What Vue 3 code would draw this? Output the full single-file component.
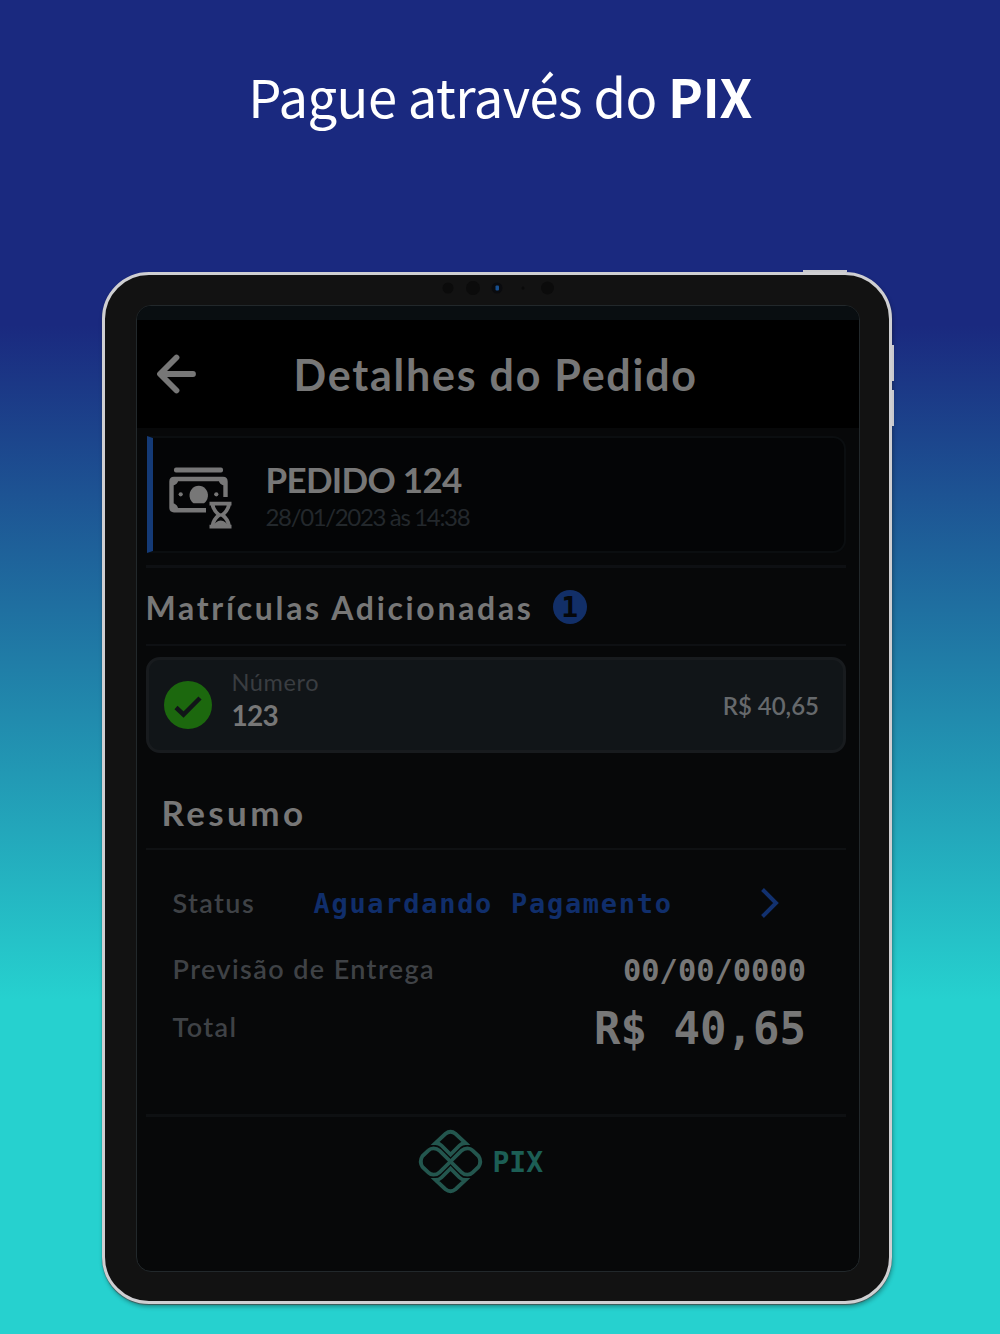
<template>
  <div class="page">
    <h1 class="headline">Pague através do <b>PIX</b></h1>

    <div class="device">
      <span class="side-btn power"></span>
      <span class="side-btn volume-up"></span>
      <span class="side-btn volume-down"></span>
      <svg class="camera" width="114" height="20" viewBox="0 0 114 20">
        <circle cx="6" cy="10" r="5.5" fill="#0b0b0b" />
        <circle cx="31" cy="10" r="7" fill="#0b0b0b" />
        <circle cx="55" cy="10" r="5.5" fill="#0a0b0e" />
        <rect x="53.5" y="7.5" width="3.5" height="5" rx="1" fill="#174f8e" />
        <circle cx="81" cy="10" r="1.5" fill="#0a0a0a" />
        <circle cx="105.5" cy="10" r="6.5" fill="#0b0b0b" />
      </svg>

      <div class="screen">
        <div class="status-bar"></div>

        <header class="topbar">
          <svg class="back" width="40" height="40" viewBox="0 0 40 40">
            <path d="M20.5 3.5 4 20l16.5 16.5M5 20h32" />
          </svg>
          <h2>Detalhes do Pedido</h2>
        </header>

        <main class="content">
          <!-- ORDER -->
          <section class="order">
            <svg class="money" width="64" height="64" viewBox="0 0 64 64">
              <rect x="5" y="1.5" width="49" height="5" rx="2" fill="#777" />
              <path
                class="bill"
                d="M56.5 31V15.5q0-2.5-2.5-2.5H5q-2.5 0-2.5 2.5v26Q2.5 44.2 5 44.2h32"
              />
              <path fill="#777" d="M3 13h6.5q-.5 6-6.5 6.500zM56 13h-6.500q.5 6 6.500 6.500zM3 44v-7q6 1 6.500 7z" />
              <path fill="#777" d="M24.5 37.3h10.500a9.200 9.600 0 1 0-10.500 0z" />
              <circle cx="11.7" cy="28.3" r="2.1" fill="#777" />
              <circle cx="47.3" cy="28.3" r="2.1" fill="#777" />
              <path class="glass" d="M40.5 37.6h22M40.5 60.6h22M43.5 38q.5 6 6.500 11-6 5-6.500 11M60 38q-.5 6-6.500 11 6 5 6.500 11" />
              <path fill="#777" d="M44 60q2.500-5 7.700-5.500 5.300.5 7.800 5.500zM49 47.500h5.500v3H49z" />
            </svg>
            <div class="order-info">
              <strong>PEDIDO {{ order.number }}</strong>
              <span>{{ order.date }}</span>
            </div>
          </section>

          <!-- REGISTRATIONS -->
          <section class="section-title">
            <h3>Matrículas Adicionadas</h3>
            <span class="count">{{ items.length }}</span>
          </section>

          <section v-for="item in items" :key="item.number" class="item">
            <svg width="48" height="48" viewBox="0 0 48 48">
              <circle cx="24" cy="24" r="24" fill="#1c680e" />
              <path d="m12 26.500 7.500 7L36 17" fill="none" stroke="#111518" stroke-width="4.5" />
            </svg>
            <div class="item-info">
              <span>Número</span>
              <strong>{{ item.number }}</strong>
            </div>
            <span class="price">{{ item.price }}</span>
          </section>

          <!-- SUMMARY -->
          <h3 class="summary-title">Resumo</h3>
          <section class="summary">
            <div class="row status">
              <span class="label">Status</span>
              <span class="value">{{ order.status }}</span>
              <svg width="18" height="30" viewBox="0 0 18 30">
                <path d="M1.5 1.5 15 15 1.5 28.5" />
              </svg>
            </div>
            <div class="row delivery">
              <span class="label">Previsão de Entrega</span>
              <span class="value">{{ order.delivery }}</span>
            </div>
            <div class="row total">
              <span class="label">Total</span>
              <span class="value">{{ order.total }}</span>
            </div>
          </section>

          <!-- PAYMENT -->
          <footer class="pix">
            <svg width="63" height="63" viewBox="0 0 63 63">
              <path d="M31.5 24.5 22.5 15.5Q20 13 16.5 13L26.5 3.8q5-4 10 0L46.500 13q-3.500 0-6 2.500z" />
              <path d="M31.5 38.5 22.5 47.5Q20 50 16.5 50l10 9.200q5 4 10 0l10-9.200q-3.500 0-6-2.500z" />
              <path d="M31.5 31.5 20.5 20.7q-2.500-2.400-6-2.400-3 0-5 2L3.500 26q-3.500 5.500 0 11l6 5.700q2 2 5 2 3.500 0 6-2.400z" />
              <path d="M31.5 31.5 42.5 20.7q2.500-2.400 6-2.400 3 0 5 2l6 5.700q3.500 5.500 0 11l-6 5.700q-2 2-5 2-3.500 0-6-2.400z" />
            </svg>
            <span>PIX</span>
          </footer>
        </main>
      </div>
    </div>
  </div>
</template>

<script setup>
import { ref } from "vue"

const order = ref({
  number: 124,
  date: "28/01/2023 às 14:38",
  status: "Aguardando Pagamento",
  delivery: "00/00/0000",
  total: "R$ 40,65",
})

const items = ref([{ number: "123", price: "R$ 40,65" }])
</script>

<style>
body {
  margin: 0;
}
</style>

<style scoped>
* {
  box-sizing: border-box;
}

.page {
  width: 1000px;
  height: 1334px;
  overflow: hidden;
  background: linear-gradient(#1a297f 325px, #26d1cf 1000px);
  font-family: Lato, "Open Sans", sans-serif;
}

h1,
h2,
h3 {
  margin: 0;
}

.headline {
  height: 272px;
  padding-top: 55px;
  color: #fff;
  font-family: "Noto Sans CJK JP", "Noto Sans", sans-serif;
  font-size: 52.5px;
  font-weight: 400;
  line-height: 80px;
  letter-spacing: -0.5px;
  text-align: center;
  white-space: nowrap;
}

.headline b {
  font-weight: 700;
}

/* TABLET FRAME */
.device {
  position: relative;
  width: 790px;
  height: 1032px;
  margin-left: 102px;
  padding: 30px 29px 29px 30.5px;
  border: 3px solid #cfcfd2;
  border-radius: 47px;
  background: #121212;
  box-shadow: 0 1px 1px rgba(70, 70, 70, 0.8), 1px 3px 4px rgba(0, 0, 0, 0.3);
}

.side-btn {
  position: absolute;
  background: #c9c9cd;
}

.power {
  top: -5px;
  left: 698px;
  width: 44px;
  height: 2px;
}

.volume-up,
.volume-down {
  right: -5px;
  width: 2px;
  height: 36px;
}

.volume-up {
  top: 70px;
}

.volume-down {
  top: 115px;
}

.camera {
  position: absolute;
  top: 3px;
  left: 337px;
}

.screen {
  height: 967px;
  border: 1px solid #22282b;
  border-radius: 15px;
  overflow: hidden;
  background: #070809;
}

.status-bar {
  height: 14px;
  background: #090e11;
}

.topbar {
  display: flex;
  align-items: center;
  height: 108px;
  padding-left: 19px;
  background: #000;
}

.back {
  fill: none;
  stroke: #777;
  stroke-width: 5.8;
  stroke-linecap: round;
  stroke-linejoin: round;
}

.topbar h2 {
  margin-left: 98px;
  color: #777;
  font-size: 43px;
  font-weight: 700;
  letter-spacing: 1.75px;
  white-space: nowrap;
}

.content {
  padding: 8px 13px 0 9px;
}

/* ORDER */
.order {
  display: flex;
  height: 117px;
  margin-left: 1px;
  padding: 28px 0 0 16px;
  border: 2px solid #0b0e10;
  border-left: 6px solid #143a76;
  border-radius: 0 13px 13px 0;
  background: #040506;
}

.order-info {
  display: flex;
  flex-direction: column;
  margin-left: 33px;
  white-space: nowrap;
}

.order-info strong {
  height: 41px;
  margin-top: -7px;
  color: #777;
  font-size: 35px;
  line-height: 40px;
  letter-spacing: -0.7px;
}

.order-info span {
  color: #23282c;
  font-size: 24px;
  line-height: 34px;
  letter-spacing: -1.35px;
}

/* REGISTRATIONS */
.section-title {
  display: flex;
  align-items: center;
  height: 81px;
  margin-top: 12px;
  padding-top: 2px;
  border-top: 3px solid #0e1013;
  border-bottom: 2px solid #0e1013;
}

.section-title h3 {
  color: #777;
  font-size: 32px;
  font-weight: 700;
  letter-spacing: 2.68px;
}

.count {
  width: 34px;
  height: 34px;
  margin-left: 19px;
  border-radius: 50%;
  background: #122f68;
  color: #05070a;
  font: bold 28px/36px "DejaVu Sans Mono", monospace;
  text-align: center;
}

.item {
  display: flex;
  align-items: center;
  height: 96px;
  margin-top: 11px;
  padding: 0 24px 0 15px;
  border: 3px solid #181b1e;
  border-radius: 14px;
  background: #111518;
}

.item-info {
  display: flex;
  flex-direction: column;
  margin-left: 20px;
}

.item-info span {
  margin-top: -14px;
  color: #3a3d41;
  font-size: 23.5px;
  line-height: 34px;
  letter-spacing: 0.6px;
}

.item-info strong {
  color: #777;
  font-size: 28px;
  line-height: 32px;
  letter-spacing: -0.8px;
}

.price {
  margin-left: auto;
  color: #66696c;
  font-size: 24px;
  font-weight: 600;
}

/* SUMMARY */
.summary-title {
  height: 97px;
  padding: 35px 0 0 16px;
  border-bottom: 2px solid #0f1113;
  color: #777;
  font-size: 35px;
  font-weight: 700;
  line-height: 48px;
  letter-spacing: 3.4px;
}

.summary {
  height: 264px;
  padding: 32px 40px 0 27px;
}

.row {
  display: flex;
  align-items: center;
  height: 42px;
  white-space: nowrap;
}

.row .label {
  padding-bottom: 2px;
  color: #3f4246;
  font-size: 27px;
  font-weight: 600;
  letter-spacing: 1.4px;
}

.row .value {
  margin-left: auto;
  color: #777;
  font-family: "DejaVu Sans Mono", monospace;
  font-weight: 700;
}

.status .label {
  width: 141px;
}

.status .value {
  margin-left: 0;
  color: #102e6b;
  font-size: 27px;
  letter-spacing: 1.7px;
}

.status svg {
  margin-left: auto;
  margin-right: 27px;
  fill: none;
  stroke: #12316f;
  stroke-width: 4;
}

.delivery {
  margin-top: 24px;
}

.delivery .value {
  padding-top: 2px;
  font-size: 30.4px;
}

.total {
  margin-top: 16px;
}

.total .value {
  padding-top: 2px;
  font-size: 44px;
}

/* PAYMENT */
.pix {
  display: flex;
  align-items: center;
  height: 92px;
  padding-left: 273px;
  border-top: 3px solid #0e1012;
}

.pix svg {
  fill: none;
  stroke: #23564e;
  stroke-width: 3.8;
  overflow: visible;
}

.pix span {
  margin-left: 11px;
  padding-top: 2px;
  color: #1c5e55;
  font: bold 28px "DejaVu Sans Mono", monospace;
}

.bill {
  fill: none;
  stroke: #777;
  stroke-width: 4.4;
}

.glass {
  fill: none;
  stroke: #777;
  stroke-width: 3.8;
}
</style>
